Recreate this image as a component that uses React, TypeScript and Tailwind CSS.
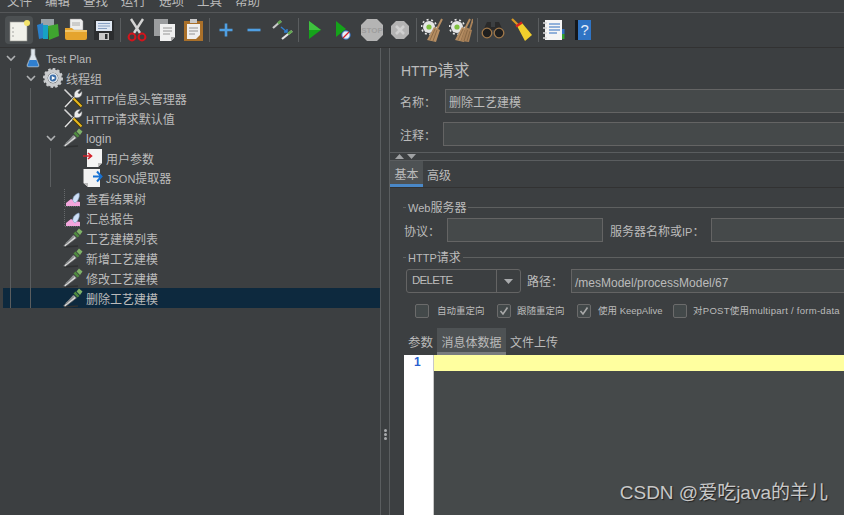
import React from 'react'

const FONT = '"Liberation Sans", "Noto Sans CJK SC", sans-serif'

// latin part of a label, the original font has narrow capitals
const L = ({ children }: { children: React.ReactNode }) => <span className="text-[11px]">{children}</span>

// ---------- tree icons ----------
const Pipette = () => (
  <svg width="20" height="20" viewBox="0 0 20 20">
    <path d="M1 19 L15 18" stroke="#2f3132" strokeWidth="1.4" />
    <path d="M0.5 18 L10.5 7 L13.5 10 L2.5 18.5 Z" fill="#d8d8d8" stroke="#55585a" strokeWidth="0.7" />
    <path d="M3 15.5 L11 8.5" stroke="#85888a" strokeWidth="1.5" />
    <path d="M10.5 5.5 L14.5 9.5 L16.5 8 L12.5 3.5 Z" fill="#4f8a3f" />
    <path d="M13.5 3.5 L16 0.5 L19.5 3.5 L17 7 Z" fill="#7fb368" />
  </svg>
)
const Tools = () => (
  <svg width="20" height="20" viewBox="0 0 20 20">
    <path d="M1.5 1.5 L10 10" stroke="#d6d6d6" strokeWidth="1.6" />
    <path d="M2 19 L12 8.5" stroke="#3a3c3d" strokeWidth="3" />
    <path d="M2 19 L12 8.5" stroke="#e6e6e6" strokeWidth="1.3" />
    <path d="M10.5 10.5 L18.5 18.5" stroke="#3a3000" strokeWidth="3.4" />
    <path d="M10.5 10.5 L18.5 18.5" stroke="#e8b71e" strokeWidth="2.2" />
    <path d="M11.5 8.5 C10.5 4 13.5 1 17.5 1.5 L15 4.5 L16 6 L19 3.5 C19.5 8 16 10.5 12.5 9.5 Z" fill="#ececec" stroke="#77797b" strokeWidth="0.5" />
  </svg>
)
const Flask = () => (
  <svg width="14" height="20" viewBox="0 0 14 20">
    <path d="M5 1 H9 V7 L13 17 Q13.5 19 11.5 19 H2.5 Q0.5 19 1 17 L5 7 Z" fill="#dfe6ec" stroke="#8d9398" strokeWidth="0.7" />
    <path d="M3.5 12 H10.5 L12.5 17.5 Q12.5 18.5 11.5 18.5 H2.5 Q1.5 18.5 1.5 17.5 Z" fill="#2f7fd0" />
  </svg>
)
const Gear = () => (
  <svg width="20" height="20" viewBox="0 0 20 20">
    <circle cx="10" cy="10" r="7" fill="none" stroke="#c9cbcd" strokeWidth="3.4" />
    <circle cx="10" cy="10" r="9" fill="none" stroke="#c9cbcd" strokeWidth="2" strokeDasharray="2.6 2.05" />
    <circle cx="10" cy="10" r="5" fill="#e3e8ee" />
    <circle cx="10" cy="10" r="3.4" fill="#3c6ea8" />
    <path d="M8.8 8 L12.3 10 L8.8 12 Z" fill="#ffffff" />
  </svg>
)
const DocIn = () => (
  <svg width="20" height="20" viewBox="0 0 20 20">
    <path d="M4 1 H19 V15 L15 19 H4 Z" fill="#f4f4f4" />
    <path d="M19 15 H15 V19 Z" fill="#bdbdbd" />
    <path d="M0 8 H8 M5 5 L8.5 8 L5 11" fill="none" stroke="#d3202a" strokeWidth="1.6" />
  </svg>
)
const DocOut = () => (
  <svg width="20" height="20" viewBox="0 0 20 20">
    <path d="M0.5 1 H17 V19 H5 L0.5 15 Z" fill="#f2f2f2" />
    <path d="M0.5 15 H5 V19 Z" fill="#b9b9b9" />
    <path d="M10 8.5 H17 M14 3.5 L18.5 8.5 L14 13.5" fill="none" stroke="#1672d4" strokeWidth="2" />
  </svg>
)
const Graph = () => (
  <svg width="20" height="20" viewBox="0 0 20 20">
    <path d="M1.5 1 V18.5 H17" fill="none" stroke="#66696b" strokeWidth="1" strokeDasharray="1 1" />
    <path d="M3 18 V15 L8 11 L12 13 L17 14 V18 Z" fill="#f2a6dc" />
    <path d="M10 13 C9 10 12 6 16 5 C17 9 15 13 12 15 Z" fill="#cfe0f7" stroke="#8aa4c8" strokeWidth="0.6" />
  </svg>
)

// ---------- toolbar icons ----------
const NewDoc = () => (
  <svg width="24" height="24" viewBox="0 0 24 24">
    <rect x="3" y="4" width="17" height="19" fill="#f1f1ea" stroke="#9a9a94" strokeWidth="0.6" />
    <circle cx="6" cy="10" r="0.7" fill="#888" /><circle cx="6" cy="14" r="0.7" fill="#888" /><circle cx="6" cy="18" r="0.7" fill="#888" />
    <circle cx="20" cy="5" r="3" fill="#f4e46a" />
  </svg>
)
const Books = () => (
  <svg width="24" height="24" viewBox="0 0 24 24">
    <path d="M5 1 H18 V10 H5 Z" fill="#9aa3a8" />
    <path d="M1 7 L7 5 L8 20 L3 21 Z" fill="#2a7fc9" />
    <path d="M7 7 H12 V21 H7 Z" fill="#17a2c4" />
    <path d="M12 8 L22 6 L23 18 L13 22 Z" fill="#3fa52f" />
  </svg>
)
const Folder = () => (
  <svg width="24" height="24" viewBox="0 0 24 24">
    <path d="M6 1 H17 L19 3 V12 H6 Z" fill="#eeeeee" stroke="#888" strokeWidth="0.5" />
    <path d="M8 5 H16 M8 7 H16" stroke="#999" strokeWidth="0.8" />
    <path d="M1 10 H8 L10 12 H23 V20 Q23 22 21 22 H3 Q1 22 1 20 Z" fill="#e5a42d" />
    <path d="M1 13 H23" stroke="#f4cf7a" strokeWidth="1.6" />
  </svg>
)
const Save = () => (
  <svg width="22" height="22" viewBox="0 0 22 22">
    <path d="M1 1 H21 V21 H1 Z" fill="#2b2d2f" />
    <rect x="3" y="2" width="16" height="10" fill="#dfe7f2" />
    <path d="M5 4.5 H17 M5 7 H17 M5 9.5 H14" stroke="#7d97bd" strokeWidth="0.9" />
    <rect x="6" y="14" width="10" height="7" fill="#c9c9c9" />
    <rect x="12" y="15" width="2.5" height="5" fill="#2b2d2f" />
  </svg>
)
const Scissors = () => (
  <svg width="20" height="24" viewBox="0 0 20 24">
    <path d="M4 1 L13 15 M16 1 L7 15" stroke="#d4d4d4" strokeWidth="2.4" />
    <ellipse cx="5" cy="19" rx="3.4" ry="3.4" fill="none" stroke="#d3141c" strokeWidth="2" />
    <ellipse cx="15" cy="19" rx="3.4" ry="3.4" fill="none" stroke="#d3141c" strokeWidth="2" />
  </svg>
)
const Copy = () => (
  <svg width="24" height="24" viewBox="0 0 24 24">
    <rect x="1" y="1" width="14" height="17" fill="#9b9d9f" />
    <path d="M7 6 H22 V19 L18 23 H7 Z" fill="#f0f0f0" />
    <path d="M22 19 H18 V23 Z" fill="#a9a9a9" />
    <path d="M10 10 H19 M10 13 H19 M10 16 H17" stroke="#8a8a8a" strokeWidth="0.9" />
  </svg>
)
const Paste = () => (
  <svg width="22" height="24" viewBox="0 0 22 24">
    <rect x="1" y="3" width="19" height="20" fill="#a9702a" />
    <path d="M4 6 H17 V17 L13 21 H4 Z" fill="#efefef" />
    <path d="M6 10 H15 M6 13 H15 M6 16 H12" stroke="#888" strokeWidth="0.9" />
    <rect x="7" y="1" width="7" height="4" fill="#c9c9c9" />
  </svg>
)
const Plus = () => (
  <svg width="16" height="16" viewBox="0 0 16 16"><path d="M8 1.5 V14.5 M1.5 8 H14.5" stroke="#4f9fe2" strokeWidth="2.6" /></svg>
)
const Minus = () => (
  <svg width="16" height="16" viewBox="0 0 16 16"><path d="M1.5 8 H14.5" stroke="#4f9fe2" strokeWidth="2.6" /></svg>
)
const Toggle = () => (
  <svg width="22" height="22" viewBox="0 0 22 22">
    <path d="M1 9 L9 2" stroke="#c9c9c9" strokeWidth="2.2" /><path d="M6 4.5 L9 2" stroke="#63a852" strokeWidth="2.8" />
    <path d="M10 20 L20 12" stroke="#e3e3e3" strokeWidth="2.2" /><path d="M16 15 L20 12" stroke="#63a852" strokeWidth="2.8" />
    <path d="M9 8 L15 13 M15 10 V13 H12" fill="none" stroke="#2f7fd0" strokeWidth="1.4" />
  </svg>
)
const Play = () => (
  <svg width="14" height="20" viewBox="0 0 14 20"><path d="M1 1 L13 10 L1 19 Z" fill="#15a31a" /><path d="M1 1 L13 10 L1 10 Z" fill="#3fc13f" /></svg>
)
const PlayNoTimer = () => (
  <svg width="16" height="20" viewBox="0 0 16 20">
    <path d="M1 1 L11 9 L1 17 Z" fill="#15a31a" />
    <circle cx="11" cy="15" r="4.2" fill="#e8eef6" stroke="#2f6fc0" strokeWidth="1" />
    <path d="M8 18 L14 12" stroke="#d3202a" strokeWidth="1.3" />
  </svg>
)
const Stop = () => (
  <svg width="24" height="24" viewBox="0 0 24 24">
    <path d="M7 1 H17 L23 7 V17 L17 23 H7 L1 17 V7 Z" fill="#b4b4b4" />
    <text x="12" y="15" textAnchor="middle" fontSize="8" fontWeight="bold" fill="#9e9e9e" fontFamily="Liberation Sans">STOP</text>
  </svg>
)
const Shutdown = () => (
  <svg width="20" height="20" viewBox="0 0 20 20">
    <path d="M6 1 H14 L19 6 V14 L14 19 H6 L1 14 V6 Z" fill="#b4b4b4" />
    <path d="M6 6 L14 14 M14 6 L6 14" stroke="#d0d0d0" strokeWidth="2.6" />
  </svg>
)
const Broom = ({ double }: { double?: boolean }) => (
  <svg width="24" height="24" viewBox="0 0 24 24">
    <circle cx="8" cy="9" r="6" fill="#e6e6e6" />
    <circle cx="8" cy="9" r="7.4" fill="none" stroke="#e6e6e6" strokeWidth="1.6" strokeDasharray="2 2.6" />
    <circle cx="8" cy="9" r="2.6" fill="#7fc23f" />
    <path d="M6 22 L13 9 L19 12 L15 24 Z" fill="#b58d62" />
    <path d="M9 22 L14 11 M12 23 L16 12" stroke="#7d5f3e" strokeWidth="0.7" />
    <path d="M16 11 L21 1" stroke="#b58d62" strokeWidth="2" />
    {double && <path d="M12 23 L17 9 L23 12 L20 24 Z" fill="#a98259" />}
    {double && <path d="M15 23 L18.5 12 M18 23 L21 13" stroke="#7d5f3e" strokeWidth="0.7" />}
    {double && <path d="M21 11 L24 1" stroke="#a98259" strokeWidth="1.8" />}
  </svg>
)
const Binoculars = () => (
  <svg width="24" height="18" viewBox="0 0 24 18">
    <path d="M6 1 H10 V6 H14 V1 H18 L23 12 H13 V9 H11 V12 H1 Z" fill="#2a2a2a" />
    <circle cx="6" cy="12" r="4.8" fill="#1f1f1f" stroke="#a0784a" strokeWidth="1.3" />
    <circle cx="18" cy="12" r="4.8" fill="#1f1f1f" stroke="#a0784a" strokeWidth="1.3" />
  </svg>
)
const Sweep = () => (
  <svg width="22" height="24" viewBox="0 0 22 24">
    <path d="M1 1 L8 8" stroke="#d89a22" strokeWidth="2.2" />
    <path d="M6 8 L11 5 L21 17 L14 23 Z" fill="#f1cf2c" />
    <path d="M5 8.5 L11 4.5" stroke="#d8261c" strokeWidth="2.4" />
  </svg>
)
const Notes = () => (
  <svg width="24" height="24" viewBox="0 0 24 24">
    <rect x="3" y="2" width="17" height="20" fill="#f5f5f5" />
    <path d="M7 6 H18 M7 9 H18 M7 12 H18 M7 15 H15" stroke="#2f6fc0" strokeWidth="1.1" />
    <path d="M1 5 H5 M1 10 H5 M1 15 H5 M1 20 H5" stroke="#d8d8d8" strokeWidth="1.6" />
    <rect x="20" y="11" width="2.5" height="5" fill="#2f6fc0" /><rect x="20" y="16" width="2.5" height="5" fill="#2fa02f" />
  </svg>
)
const Help = () => (
  <svg width="18" height="22" viewBox="0 0 18 22">
    <rect x="1" y="1" width="16" height="20" fill="#2f74c4" />
    <rect x="1" y="1" width="3" height="20" fill="#14181c" />
    <text x="6.5" y="16" fontSize="15" fill="#e6eef8" fontFamily="Liberation Sans">?</text>
  </svg>
)

const Chevron = () => (
  <svg width="10" height="10" viewBox="0 0 10 10"><path d="M1 3 L5 7 L9 3" fill="none" stroke="#afb1b3" strokeWidth="1.6" /></svg>
)

// ---------- toolbar ----------
const Btn = ({ children, active }: { children: React.ReactNode; active?: boolean }) => (
  <div className={`w-[28.4px] h-[28px] flex items-center justify-center rounded-sm ${active ? 'bg-[#4c5052]' : ''}`}>{children}</div>
)
const Sep = () => <div className="w-px h-6 bg-[#5a5d5f] mx-[1.5px]" />

function Toolbar() {
  return (
    <div className="h-[35px] shrink-0 flex items-center pl-[5px] border-b border-[#323232]">
      <Btn active><NewDoc /></Btn><Btn><Books /></Btn><Btn><Folder /></Btn><Btn><Save /></Btn><Sep />
      <Btn><Scissors /></Btn><Btn><Copy /></Btn><Btn><Paste /></Btn><Sep />
      <Btn><Plus /></Btn><Btn><Minus /></Btn><Btn><Toggle /></Btn><Sep />
      <Btn><Play /></Btn><Btn><PlayNoTimer /></Btn><Btn><Stop /></Btn><Btn><Shutdown /></Btn><Sep />
      <Btn><Broom /></Btn><Btn><Broom double /></Btn><Sep />
      <Btn><Binoculars /></Btn><Btn><Sweep /></Btn><Sep />
      <Btn><Notes /></Btn><Btn><Help /></Btn>
    </div>
  )
}

// ---------- tree ----------
type Row = { key: string; label: React.ReactNode; pad: number; icon: React.ReactNode; chevron?: boolean; selected?: boolean; latin?: boolean }
const rows: Row[] = [
  { key: 'plan', label: <L>Test Plan</L>, pad: 3, icon: <Flask />, chevron: true, latin: true },
  { key: 'group', label: '线程组', pad: 23, icon: <Gear />, chevron: true },
  { key: 'header', label: <><L>HTTP</L>信息头管理器</>, pad: 60, icon: <Tools /> },
  { key: 'default', label: <><L>HTTP</L>请求默认值</>, pad: 60, icon: <Tools /> },
  { key: 'login', label: 'login', pad: 43, icon: <Pipette />, chevron: true, latin: true },
  { key: 'params', label: '用户参数', pad: 80, icon: <DocIn /> },
  { key: 'json', label: <><L>JSON</L>提取器</>, pad: 80, icon: <DocOut />, latin: true },
  { key: 'tree', label: '查看结果树', pad: 60, icon: <Graph /> },
  { key: 'report', label: '汇总报告', pad: 60, icon: <Graph /> },
  { key: 'list', label: '工艺建模列表', pad: 60, icon: <Pipette /> },
  { key: 'add', label: '新增工艺建模', pad: 60, icon: <Pipette /> },
  { key: 'edit', label: '修改工艺建模', pad: 60, icon: <Pipette /> },
  { key: 'del', label: '删除工艺建模', pad: 60, icon: <Pipette />, selected: true },
]

function Tree() {
  return (
    <div className="relative w-[380px] shrink-0 pl-[3px]">
      <div className="absolute left-[10px] top-[20px] h-[240px] w-px bg-[#5a5d5f] z-10" />
      <div className="absolute left-[30px] top-[40px] h-[220px] w-px bg-[#5a5d5f] z-10" />
      <div className="absolute left-[50px] top-[100px] h-[39px] w-px bg-[#5a5d5f] z-10" />
      {rows.map((r) => (
        <div key={r.key} className={`h-[20px] flex items-center text-[12px] ${r.selected ? 'bg-[#0d293e]' : ''}`} style={{ paddingLeft: r.pad }}>
          {r.chevron && <div className="w-[17px] shrink-0"><Chevron /></div>}
          <div className="w-[20px] h-[20px] shrink-0 flex items-center justify-center">{r.icon}</div>
          <span className={`ml-[3px] whitespace-nowrap ${r.latin ? 'pt-[1px]' : 'pt-[3px]'}`}>{r.label}</span>
        </div>
      ))}
    </div>
  )
}

// ---------- form bits ----------
const Field = ({ value, className }: { value?: string; className: string }) => (
  <div className={`h-[24px] bg-[#45494a] border border-[#646464] flex items-center pl-[3px] pt-[3px] text-[12px] whitespace-nowrap ${className}`}>{value}</div>
)
const Group = ({ title }: { title: React.ReactNode }) => (
  <div className="flex items-center h-[16px] mr-[-8px]">
    <div className="w-[3px] h-px bg-[#5e6060]" />
    <span className="mx-[2px] pt-[2px] text-[12px] whitespace-nowrap">{title}</span>
    <div className="flex-1 h-px bg-[#5e6060]" />
  </div>
)
const Check = ({ label, checked, gap, width }: { label: string; checked?: boolean; gap: string; width: string }) => (
  <div className={`flex items-center shrink-0 ${width}`}>
    <div className="w-[14px] h-[14px] rounded-[2px] border border-[#6b6b6b] bg-[#43494a] flex items-center justify-center shrink-0">
      {checked && <svg width="10" height="10" viewBox="0 0 10 10"><path d="M1.5 5 L4 8 L8.5 1.5" fill="none" stroke="#a9a9a9" strokeWidth="1.6" /></svg>}
    </div>
    <span className={`text-[9.5px] whitespace-nowrap ${gap}`}>{label}</span>
  </div>
)

function Form() {
  return (
    <div className="flex-1 min-w-0 overflow-hidden flex flex-col border-l border-[#5a5d5f]">
      <div className="pl-[11px] pt-[13px] h-[41px] text-[16px] leading-[20px]"><span className="text-[14px]">HTTP</span>请求</div>
      <div className="flex items-center pl-[10px] h-[24px] text-[12px]">
        <span className="w-[45px] shrink-0 pt-[3px]">名称：</span>
        <Field value="删除工艺建模" className="w-[420px] shrink-0" />
      </div>
      <div className="flex items-center pl-[10px] h-[24px] mt-[9px] text-[12px]">
        <span className="w-[43px] shrink-0 pt-[3px]">注释：</span>
        <Field className="w-[420px] shrink-0" />
      </div>
      <div className="h-[9px] mt-[6px] border-y border-[#5a5d5f] flex items-center gap-[3px] pl-[5px]">
        <svg width="9" height="5" viewBox="0 0 9 5"><path d="M0 5 L4.5 0 L9 5 Z" fill="#a0a2a4" /></svg>
        <svg width="9" height="5" viewBox="0 0 9 5"><path d="M0 0 L4.5 5 L9 0 Z" fill="#a0a2a4" /></svg>
      </div>
      <div className="h-[27px] flex items-stretch border-b border-[#323232] text-[12px] leading-[15px]">
        <div className="w-[33px] bg-[#4e5254] border-b-[3px] border-[#4a88c7] flex items-center justify-center pt-[6px]">基本</div>
        <div className="ml-[4px] flex items-center pt-[4px]">高级</div>
      </div>
      <div className="pl-[13px] pt-[11px] flex flex-col">
        <Group title={<><L>Web</L>服务器</>} />
        <div className="flex items-center h-[24px] mt-[3px] text-[12px] pl-[1px]">
          <span className="w-[43px] shrink-0 pt-[3px]">协议：</span>
          <Field className="w-[156px] shrink-0" />
          <span className="w-[101px] shrink-0 ml-[7px] pt-[3px] whitespace-nowrap">服务器名称或<L>IP</L>：</span>
          <Field className="w-[200px] shrink-0" />
        </div>
        <div className="mt-[7px]"><Group title={<><L>HTTP</L>请求</>} /></div>
        <div className="flex items-center h-[24px] mt-[4px] text-[12px] pl-[3px]">
          <div className="w-[115px] h-[24px] shrink-0 flex border border-[#646464] rounded-[3px] bg-[#3c3f41]">
            <div className="w-[90px] flex items-center pl-[5px] border-r border-[#646464] text-[11.5px] tracking-[-0.7px]">DELETE</div>
            <div className="flex-1 flex items-center justify-center">
              <svg width="9" height="5" viewBox="0 0 9 5"><path d="M0 0 L4.5 5 L9 0 Z" fill="#a9abad" /></svg>
            </div>
          </div>
          <span className="w-[44px] shrink-0 ml-[6px] pt-[2px]">路径：</span>
          <Field value="/mesModel/processModel/67" className="w-[300px] shrink-0" />
        </div>
        <div className="flex items-center h-[14px] mt-[11px] pl-[12px]">
          <Check label="自动重定向" gap="ml-[8px]" width="w-[82px]" />
          <Check label="跟随重定向" checked gap="ml-[6px]" width="w-[80px]" />
          <Check label="使用 KeepAlive" checked gap="ml-[7px]" width="w-[96px]" />
          <Check label="对POST使用multipart / form-data" gap="ml-[6px] tracking-[0.27px]" width="w-[170px]" />
        </div>
      </div>
      <div className="flex items-stretch h-[27px] mt-[10px] pl-[18px] text-[12px]">
        <div className="w-[29px] flex items-center pt-[3px] text-[12.5px]">参数</div>
        <div className="w-[69px] bg-[#4e5254] border-b-[3px] border-[#797c7e] flex items-center justify-center pt-[6px]">消息体数据</div>
        <div className="ml-[4px] flex items-center pt-[3px]">文件上传</div>
      </div>
      <div className="flex-1 flex ml-[14px] min-h-0">
        <div className="w-[29px] bg-white text-[#2a5fd0] font-bold text-[12px] leading-[15px] pl-[10px] shrink-0">1</div>
        <div className="w-px bg-[#c8c8c8] shrink-0" />
        <div className="relative flex-1 bg-[#45494a]">
          <div className="h-[16px] bg-[#ffff9f]" />
          <div className="absolute right-[16px] bottom-[11px] text-[19px] leading-[22px] text-[#c8c8c8] whitespace-nowrap [text-shadow:1px_1px_1px_#222]">CSDN @爱吃java的羊儿</div>
        </div>
      </div>
    </div>
  )
}

export default function App() {
  return (
    <div className="w-[844px] h-[515px] overflow-hidden flex flex-col bg-[#3c3f41] text-[#bbbbbb]" style={{ fontFamily: FONT }}>
      <div className="h-[13px] shrink-0 overflow-hidden border-b border-[#555759]">
        <div className="flex -mt-[7px] pl-[7px] gap-[13px] text-[12.5px] leading-[18px]">
          {['文件', '编辑', '查找', '运行', '选项', '工具', '帮助'].map((m) => <span key={m}>{m}</span>)}
        </div>
      </div>
      <Toolbar />
      <div className="flex-1 flex min-h-0">
        <Tree />
        <div className="w-[9px] shrink-0 border-l border-[#5a5d5f] flex flex-col items-center gap-[1px] pt-[381px]">
          <div className="w-[3px] h-[3px] rounded-full bg-[#a9abad]" />
          <div className="w-[3px] h-[3px] rounded-full bg-[#a9abad]" />
          <div className="w-[3px] h-[3px] rounded-full bg-[#a9abad]" />
        </div>
        <Form />
      </div>
    </div>
  )
}
